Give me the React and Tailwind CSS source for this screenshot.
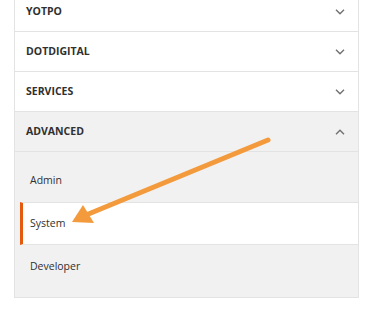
import React from 'react';

const Chevron = ({ up }) => (
    <svg width="10" height="6" viewBox="0 0 10 6" className="text-[#707070]">
        <polyline
            points={up ? '1,5.2 5,1.2 9,5.2' : '1,0.8 5,4.8 9,0.8'}
            fill="none"
            stroke="currentColor"
            strokeWidth="1.4"
        />
    </svg>
);

const sections = ['YOTPO', 'DOTDIGITAL', 'SERVICES'];
const items = ['Admin', 'System', 'Developer'];

const App = () => {
    return (
        <div className="relative w-[380px] h-[332px] bg-white overflow-hidden" style={{ fontFamily: '"Open Sans", "Liberation Sans", sans-serif' }}>
            <div className="ml-[14px] -mt-2 w-[345px] border-x border-b border-[#e3e3e3]">
                {sections.map((name) => (
                    <div key={name} className="flex items-center justify-between h-[40px] pl-[11px] pr-[13px] bg-white border-b border-[#e3e3e3]">
                        <span className="text-[10.5px] font-bold text-[#303030]">{name}</span>
                        <Chevron />
                    </div>
                ))}

                {/* open section */}
                <div className="flex items-center justify-between h-[40px] pl-[11px] pr-[13px] bg-[#f1f1f1] border-b border-[#e3e3e3]">
                    <span className="text-[10.5px] font-bold text-[#303030]">ADVANCED</span>
                    <Chevron up />
                </div>
                <div className="bg-[#f1f1f1] pt-[7px] pb-[9px]">
                    {items.map((item) => {
                        const active = item === 'System';
                        return (
                            <div
                                key={item}
                                className={
                                    active
                                        ? 'flex items-center h-[43px] ml-[5px] pl-[7px] bg-white border-l-[3px] border-[#e35a0e] border-y border-y-[#e3e3e3]'
                                        : 'flex items-center h-[43px] pl-[15px]'
                                }
                            >
                                <span className="text-[10.5px] text-[#303030]">{item}</span>
                            </div>
                        );
                    })}
                </div>
            </div>

            {/* annotation arrow */}
            <svg className="absolute left-0 top-0 pointer-events-none" width="380" height="332">
                <line x1="268" y1="140" x2="86" y2="215" stroke="#f39a3c" strokeWidth="5" strokeLinecap="round" />
                <polygon points="72,222 83,205 94,223" fill="#f39a3c" />
            </svg>
        </div>
    );
};

export default App;
